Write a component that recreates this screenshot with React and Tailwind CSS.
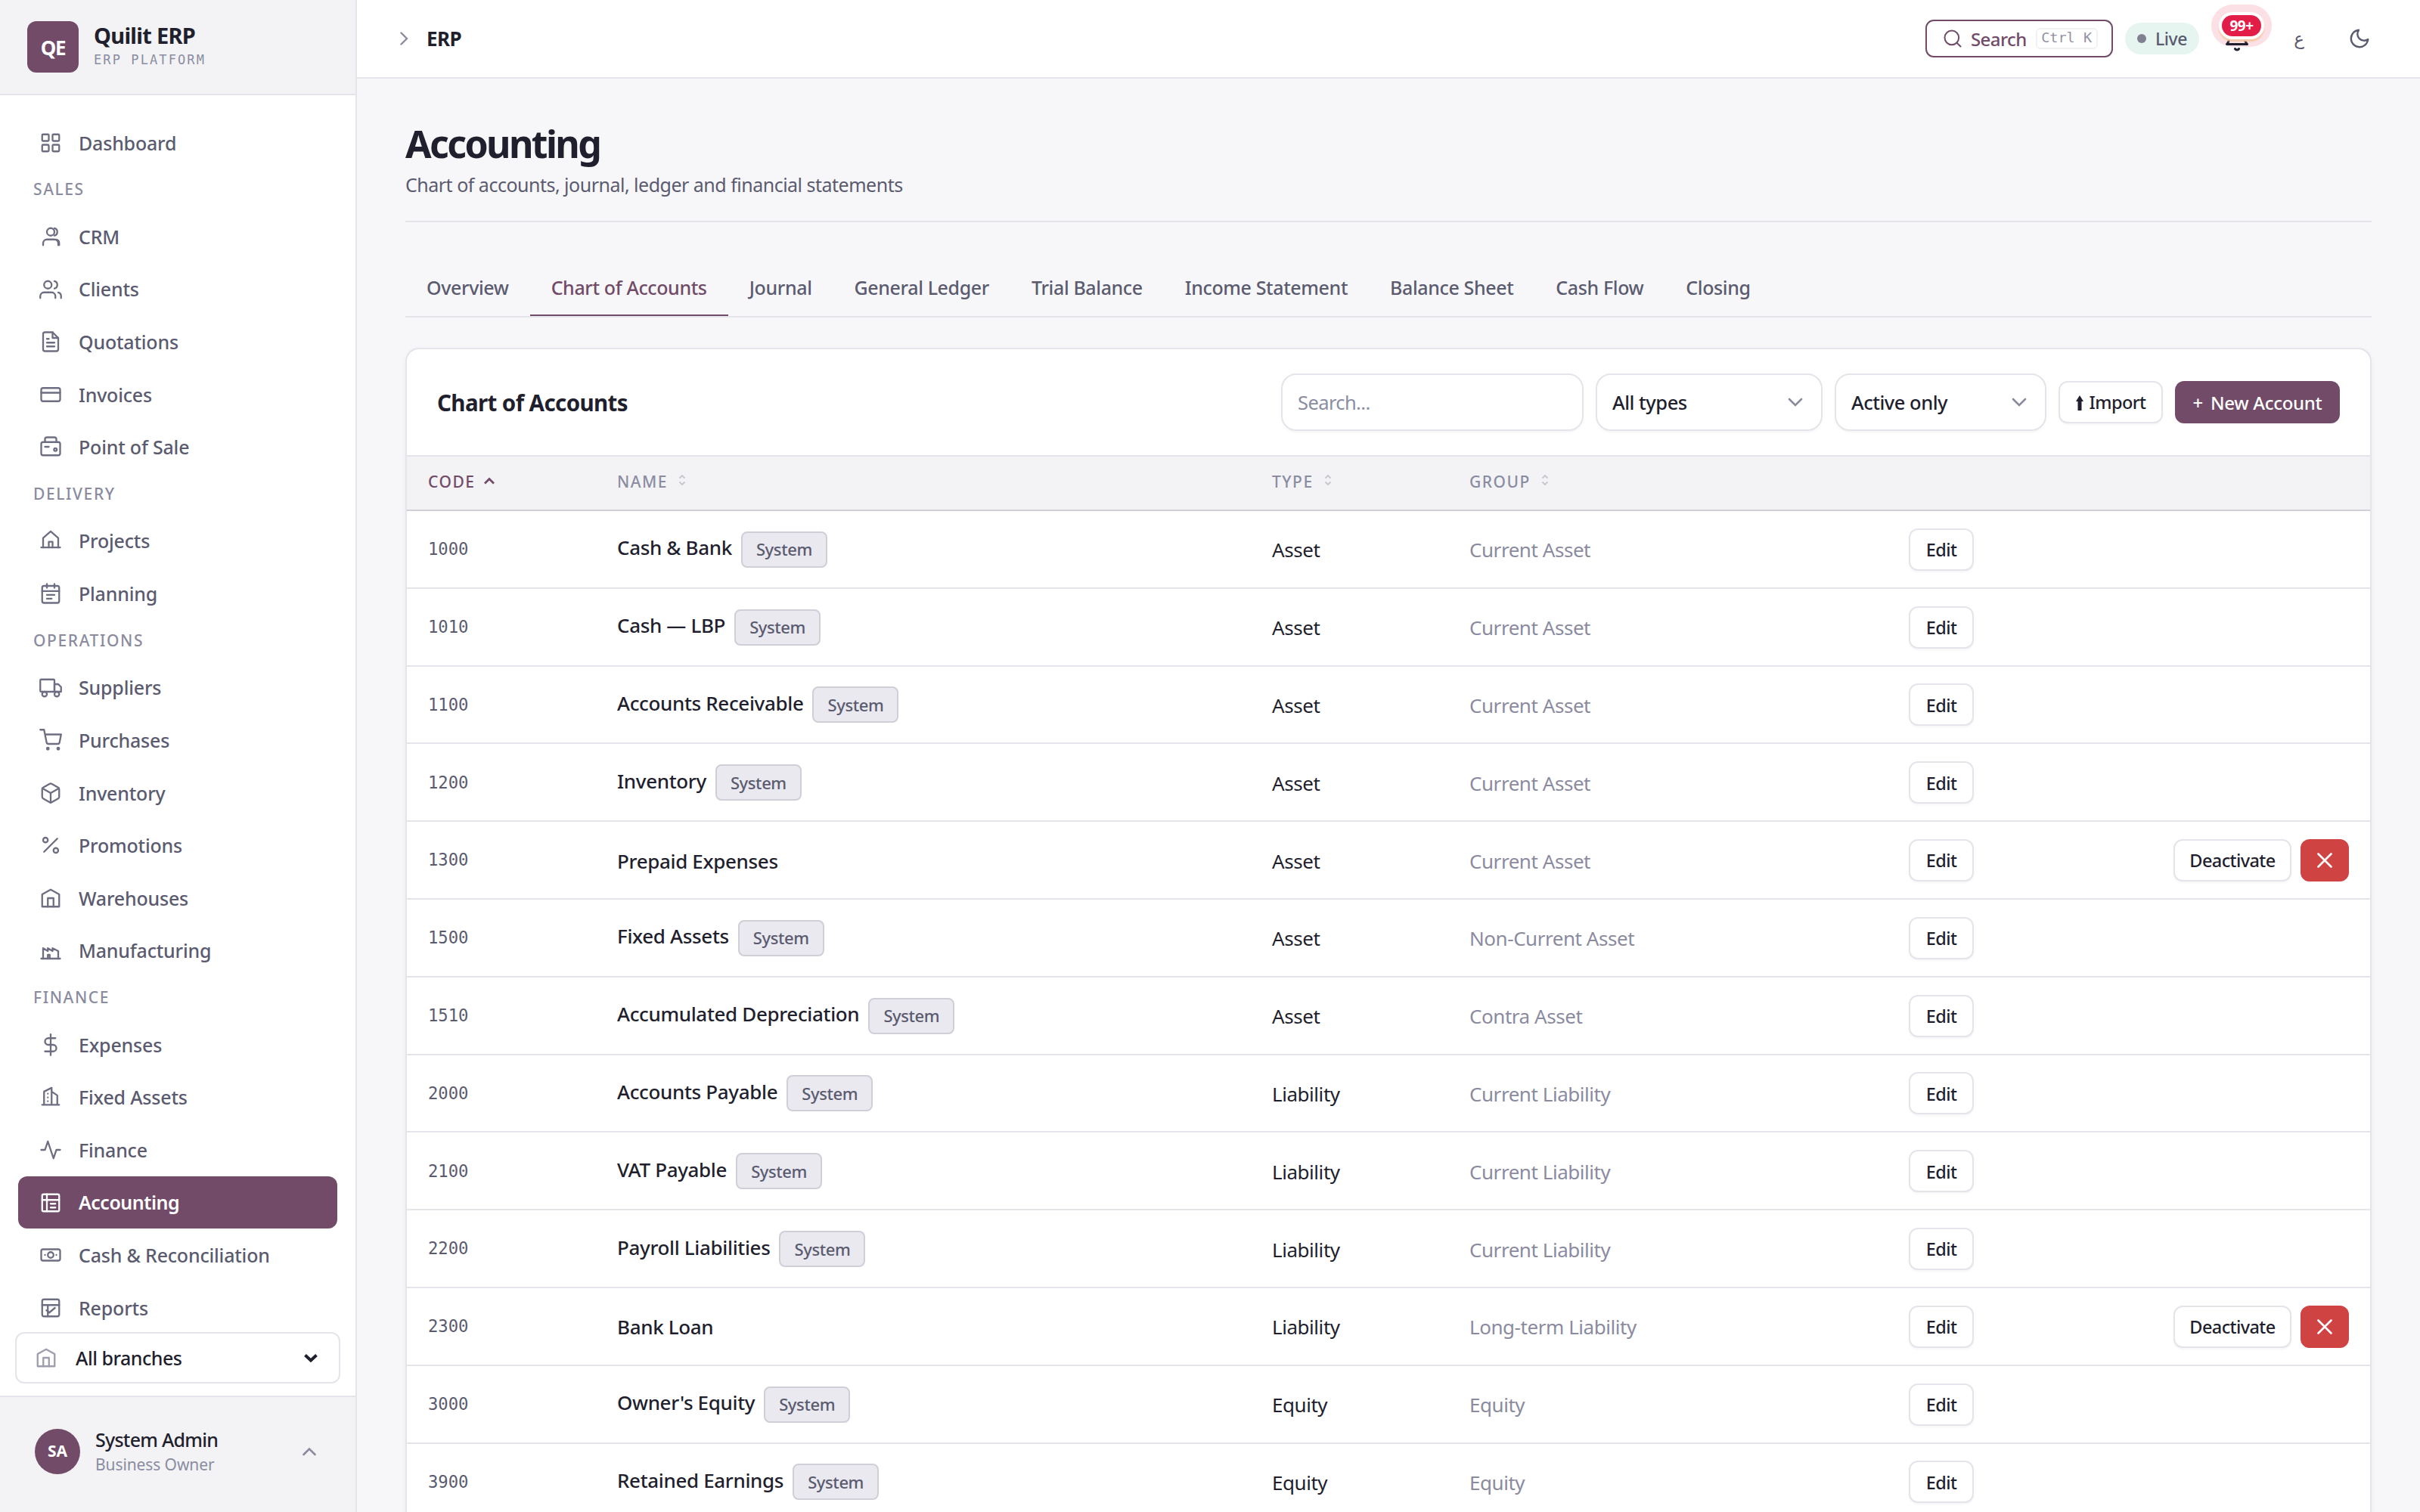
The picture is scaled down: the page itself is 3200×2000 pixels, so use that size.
import React from 'react'

const Icon = ({ size = 30, stroke = 1.85, className, children }) => (
  <svg
    width={size}
    height={size}
    viewBox="0 0 24 24"
    fill="none"
    stroke="currentColor"
    strokeWidth={stroke}
    strokeLinecap="round"
    strokeLinejoin="round"
    className={className}
  >
    {children}
  </svg>
)

const icons = {
  dashboard: (
    <>
      <rect x="3" y="3" width="7" height="7" rx="1" />
      <rect x="14" y="3" width="7" height="7" rx="1" />
      <rect x="3" y="14" width="7" height="7" rx="1" />
      <rect x="14" y="14" width="7" height="7" rx="1" />
    </>
  ),
  crm: (
    <>
      <path d="M4 21v-2a4 4 0 0 1 4-4h8a4 4 0 0 1 4 4v2" />
      <circle cx="12" cy="7" r="4" />
      <path d="M21 21v-2a4 4 0 0 0-3-3.87" />
      <path d="M16 3.13a4 4 0 0 1 0 7.75" />
    </>
  ),
  clients: (
    <>
      <path d="M17 21v-2a4 4 0 0 0-4-4H5a4 4 0 0 0-4 4v2" />
      <circle cx="9" cy="7" r="4" />
      <path d="M23 21v-2a4 4 0 0 0-3-3.87" />
      <path d="M16 3.13a4 4 0 0 1 0 7.75" />
    </>
  ),
  quotations: (
    <>
      <path d="M14 2H6a2 2 0 0 0-2 2v16a2 2 0 0 0 2 2h12a2 2 0 0 0 2-2V8z" />
      <path d="M14 2v6h6" />
      <path d="M16 13H8M16 17H8M10 9H8" />
    </>
  ),
  invoices: (
    <>
      <rect x="2" y="5" width="20" height="14" rx="2" />
      <path d="M2 10h20" />
    </>
  ),
  pos: (
    <>
      <rect x="2" y="7" width="20" height="14" rx="2" />
      <path d="M6 7V4a2 2 0 0 1 2-2h8a2 2 0 0 1 2 2v3" />
      <path d="M6 12h4" />
      <circle cx="17" cy="15" r="1.5" />
    </>
  ),
  projects: (
    <>
      <path d="M2 18.5h20" />
      <path d="M4 18.5V8.5l8-7 8 7v10" />
      <path d="M10 18.5v-6h4v6" />
    </>
  ),
  planning: (
    <>
      <rect x="3" y="4" width="18" height="18" rx="2" />
      <path d="M16 2v4M8 2v4M3 9.5h18M8 13.5h8M8 17.5h5" />
    </>
  ),
  suppliers: (
    <>
      <rect x="1" y="3" width="15" height="13" rx="1" />
      <path d="M16 8h4l3 3v5h-7z" />
      <circle cx="5.5" cy="18.5" r="2.5" />
      <circle cx="18.5" cy="18.5" r="2.5" />
    </>
  ),
  purchases: (
    <>
      <circle cx="9" cy="21" r="1" fill="currentColor" />
      <circle cx="20" cy="21" r="1" fill="currentColor" />
      <path d="M1 1h4l2.68 13.39a2 2 0 0 0 2 1.61h9.72a2 2 0 0 0 2-1.61L23 6H6" />
    </>
  ),
  inventory: (
    <>
      <path d="M21 16V8a2 2 0 0 0-1-1.73l-7-4a2 2 0 0 0-2 0l-7 4A2 2 0 0 0 3 8v8a2 2 0 0 0 1 1.73l7 4a2 2 0 0 0 2 0l7-4A2 2 0 0 0 21 16z" />
      <path d="M3.27 6.96L12 12.01l8.73-5.05M12 22.08V12" />
    </>
  ),
  promotions: (
    <>
      <path d="M19 5L5 19" />
      <circle cx="6.5" cy="6.5" r="2.5" />
      <circle cx="17.5" cy="17.5" r="2.5" />
    </>
  ),
  warehouses: (
    <>
      <path d="M3 21V8l9-5 9 5v13z" />
      <path d="M9 21v-9h6v9" />
    </>
  ),
  manufacturing: (
    <>
      <path d="M2 20h20" />
      <path d="M4 20V9l5 3V9l5 3V9l6 3v8" />
      <path d="M9 20v-4h2v4" />
    </>
  ),
  expenses: (
    <>
      <path d="M12 1v22" />
      <path d="M17 5H9.5a3.5 3.5 0 0 0 0 7h5a3.5 3.5 0 0 1 0 7H6" />
    </>
  ),
  assets: (
    <>
      <path d="M3 20.3h18M5 20.3V6.3l8-4v18M19 20.3v-10l-6-4" />
      <path d="M9 8.5v.01M9 12.5v.01M9 16.5v.01" />
    </>
  ),
  finance: <path d="M22 12h-4l-3 9L9 3l-3 9H2" />,
  accounting: (
    <>
      <rect x="3" y="3" width="18" height="18" rx="1.5" />
      <path d="M3 9h18M8 3v18M12 13h5M12 17h5" />
    </>
  ),
  cash: (
    <>
      <rect x="2" y="6" width="20" height="12" rx="2" />
      <circle cx="12" cy="12" r="3" />
      <path d="M6 12h.01M18 12h.01" />
    </>
  ),
  reports: (
    <>
      <rect x="3" y="3" width="18" height="18" rx="2" />
      <path d="M3 9h18M9 21V9" />
      <path d="M7.5 14.5l3 2.5 6-5" />
    </>
  ),
}

const menu = [
  { title: null, items: [['Dashboard', 'dashboard']] },
  {
    title: 'SALES',
    items: [
      ['CRM', 'crm'],
      ['Clients', 'clients'],
      ['Quotations', 'quotations'],
      ['Invoices', 'invoices'],
      ['Point of Sale', 'pos'],
    ],
  },
  {
    title: 'DELIVERY',
    items: [
      ['Projects', 'projects'],
      ['Planning', 'planning'],
    ],
  },
  {
    title: 'OPERATIONS',
    items: [
      ['Suppliers', 'suppliers'],
      ['Purchases', 'purchases'],
      ['Inventory', 'inventory'],
      ['Promotions', 'promotions'],
      ['Warehouses', 'warehouses'],
      ['Manufacturing', 'manufacturing'],
    ],
  },
  {
    title: 'FINANCE',
    items: [
      ['Expenses', 'expenses'],
      ['Fixed Assets', 'assets'],
      ['Finance', 'finance'],
      ['Accounting', 'accounting'],
      ['Cash & Reconciliation', 'cash'],
      ['Reports', 'reports'],
    ],
  },
]

const tabs = [
  'Overview',
  'Chart of Accounts',
  'Journal',
  'General Ledger',
  'Trial Balance',
  'Income Statement',
  'Balance Sheet',
  'Cash Flow',
  'Closing',
]

const accounts = [
  { code: '1000', name: 'Cash & Bank', type: 'Asset', group: 'Current Asset', system: true },
  { code: '1010', name: 'Cash — LBP', type: 'Asset', group: 'Current Asset', system: true },
  { code: '1100', name: 'Accounts Receivable', type: 'Asset', group: 'Current Asset', system: true },
  { code: '1200', name: 'Inventory', type: 'Asset', group: 'Current Asset', system: true },
  { code: '1300', name: 'Prepaid Expenses', type: 'Asset', group: 'Current Asset', system: false },
  { code: '1500', name: 'Fixed Assets', type: 'Asset', group: 'Non-Current Asset', system: true },
  { code: '1510', name: 'Accumulated Depreciation', type: 'Asset', group: 'Contra Asset', system: true },
  { code: '2000', name: 'Accounts Payable', type: 'Liability', group: 'Current Liability', system: true },
  { code: '2100', name: 'VAT Payable', type: 'Liability', group: 'Current Liability', system: true },
  { code: '2200', name: 'Payroll Liabilities', type: 'Liability', group: 'Current Liability', system: true },
  { code: '2300', name: 'Bank Loan', type: 'Liability', group: 'Long-term Liability', system: false },
  { code: '3000', name: "Owner's Equity", type: 'Equity', group: 'Equity', system: true },
  { code: '3900', name: 'Retained Earnings', type: 'Equity', group: 'Equity', system: true },
]

const NavItem = ({ label, icon, active }) => (
  <a
    className={
      active
        ? 'flex h-[69.6px] shrink-0 items-center gap-[22px] rounded-xl bg-[#714b67] pl-7 text-white'
        : 'flex h-[69.6px] shrink-0 items-center gap-[22px] rounded-xl pl-7 text-[#5b5b70]'
    }
  >
    <Icon className={active ? 'shrink-0' : 'shrink-0 text-[#6e6e82]'}>{icons[icon]}</Icon>
    <span className={active ? 'pt-px text-[25px] font-semibold tracking-[-0.5px]' : 'pt-px text-[25px] font-medium tracking-[-0.2px]'}>
      {label}
    </span>
  </a>
)

const Sidebar = () => (
  <aside className="flex h-full w-[472px] shrink-0 flex-col border-r-2 border-[#e4e4ea] bg-white">
    <div className="flex h-[126px] shrink-0 items-center gap-5 border-b-2 border-[#e4e4ea] bg-[#f3f3f5] pl-9">
      <div className="flex h-[68px] w-[68px] items-center justify-center rounded-xl bg-[#714b67] pt-0.5 text-[26px] font-bold tracking-[-1.2px] text-white">
        QE
      </div>
      <div className="flex flex-col pb-1">
        <span className="text-[29px] leading-[34px] font-bold tracking-[-0.7px] text-[#1f1f2e]">Quilit ERP</span>
        <span className="mt-[3px] font-['DejaVu_Sans_Mono',monospace] text-[17px] leading-6 tracking-[2.1px] text-[#8a8da2]">
          ERP PLATFORM
        </span>
      </div>
    </div>

    <nav className="flex min-h-0 flex-1 flex-col overflow-hidden px-6 pt-7">
      {menu.map((section, i) => (
        <React.Fragment key={i}>
          {section.title && (
            <div className="flex h-[54.7px] shrink-0 items-center pl-5 text-[21px] font-medium tracking-[1.6px] text-[#8b8b9f]">
              {section.title}
            </div>
          )}
          {section.items.map(([label, icon]) => (
            <NavItem key={label} label={label} icon={icon} active={label === 'Accounting'} />
          ))}
        </React.Fragment>
      ))}
    </nav>

    <div className="px-5 pb-4">
      <button className="flex h-[68px] w-[430px] items-center rounded-xl border-2 border-[#e4e4ea] bg-white pr-7 pl-6 text-[#1f1f2e]">
        <Icon className="text-[#9d9dad]">{icons.warehouses}</Icon>
        <span className="ml-6 flex-1 pt-0.5 text-left text-[25px] font-medium tracking-[-0.5px]">All branches</span>
        <svg width="18" height="12" viewBox="0 0 18 12" fill="none" stroke="currentColor" strokeWidth="4">
          <path d="M1.5 2.5L9 9.5l7.5-7" />
        </svg>
      </button>
    </div>

    <div className="flex h-[154px] shrink-0 items-center border-t-2 border-[#e4e4ea] bg-[#f3f3f5] pr-[52px] pb-2 pl-[46px]">
      <div className="flex h-[60px] w-[60px] items-center justify-center rounded-full bg-[#714b67] text-[21px] font-bold text-white">
        SA
      </div>
      <div className="ml-5 flex flex-1 flex-col">
        <span className="text-[25px] leading-[34px] font-medium tracking-[-0.75px] text-[#1f1f2e]">System Admin</span>
        <span className="text-[21px] leading-8 tracking-[-0.1px] text-[#8a8da2]">Business Owner</span>
      </div>
      <svg width="18" height="12" viewBox="0 0 18 12" fill="none" stroke="#8b8b9f" strokeWidth="2.6" strokeLinecap="round">
        <path d="M1.5 10L9 2.5l7.5 7.5" />
      </svg>
    </div>
  </aside>
)

const Topbar = () => (
  <header className="flex h-[104px] shrink-0 items-center justify-between border-b-2 border-[#e4e4ea] bg-white pr-12 pl-14">
    <div className="flex items-center">
      <svg width="12" height="18" viewBox="0 0 12 18" fill="none" stroke="#8b8b9f" strokeWidth="2.4" strokeLinecap="round">
        <path d="M2.5 1.5L10 9l-7.5 7.5" />
      </svg>
      <span className="ml-6 text-[26px] font-bold tracking-[-0.6px] text-[#1f1f2e]">ERP</span>
    </div>
    <div className="flex items-center gap-4">
      <button className="flex h-[50px] w-[248px] items-center rounded-[11px] border-2 border-[#714b67] pl-5 text-[#714b67]">
        <Icon size={28} stroke={1.7}>
          <circle cx="11" cy="11" r="8" />
          <path d="M21 21l-4.35-4.35" />
        </Icon>
        <span className="ml-2.5 pt-0.5 text-[24px] font-medium tracking-[-0.6px]">Search</span>
        <kbd className="ml-3 flex h-7 w-[82px] items-center justify-center rounded-md border-2 border-[#f1f1f4] pb-0.5 font-['DejaVu_Sans_Mono',monospace] text-[18.5px] text-[#9292a4]">
          Ctrl K
        </kbd>
      </button>
      <div className="flex h-[42px] w-[98px] items-center justify-center gap-3 rounded-full bg-[#e6f5f0] text-[23px] font-medium tracking-[-0.4px] text-[#5b5b70]">
        <span className="h-3 w-3 rounded-full bg-[#80808f]"></span>
        Live
      </div>
      <button className="relative flex h-[68px] w-[68px] items-center justify-center text-[#1f1f2e]">
        <span className="absolute -top-[11px] left-0 h-14 w-20 rounded-full bg-[#fbe1e6]"></span>
        <Icon size={36} stroke={2} className="relative">
          <path d="M18 8A6 6 0 0 0 6 8c0 6-3 9-3 9h18s-3-3-3-9" />
          <path d="M13.73 21a2 2 0 0 1-3.46 0" />
        </Icon>
        <span className="absolute top-[3px] left-3.5 flex h-7 w-[52px] items-center justify-center rounded-full bg-[#e11d48] text-[19px] font-bold tracking-[-0.6px] text-white shadow-[0_0_0_4px_#fff,0_3px_2px_4px_#f5c9a8]">
          99+
        </span>
      </button>
      <button className="flex h-16 w-16 items-center justify-center font-['DejaVu_Sans',sans-serif] text-[23px] text-[#5b5b70]">
        ع
      </button>
      <button className="flex h-16 w-16 items-center justify-center text-[#5b5b70]">
        <Icon size={30} stroke={1.9}>
          <path d="M21 12.79A9 9 0 1 1 11.21 3 7 7 0 0 0 21 12.79z" />
        </Icon>
      </button>
    </div>
  </header>
)

const SortIcon = () => (
  <svg width="10" height="14" viewBox="0 0 10 14" fill="none" stroke="#c6c6cf" strokeWidth="1.8" className="mb-1.5 ml-0.5">
    <path d="M1.5 4.5L5 1l3.5 3.5M1.5 9.5L5 13l3.5-3.5" />
  </svg>
)

const Select = ({ label, className }) => (
  <button
    className={`flex h-[76px] items-center justify-between rounded-[20px] border-2 border-[#e4e4ea] pr-6 pl-5 shadow-[0_2px_3px_rgba(0,0,0,0.04)] ${className}`}
  >
    <span className="pt-px text-[25.5px] font-medium tracking-[-0.5px] text-[#1f1f2e]">{label}</span>
    <svg width="20" height="12" viewBox="0 0 20 12" fill="none" stroke="#8b8b9f" strokeWidth="2.6" strokeLinecap="round">
      <path d="M2 2l8 8 8-8" />
    </svg>
  </button>
)

const columns = 'grid grid-cols-[250px_866px_261px_581px_1fr]'

const buttonClass =
  'flex h-14 items-center justify-center rounded-xl border-2 border-[#e4e4ea] bg-white pt-0.5 text-[23.5px] font-medium tracking-[-0.6px] text-[#1f1f2e] shadow-[0_2px_3px_rgba(0,0,0,0.04)]'

const AccountRow = ({ account }) => (
  <div className={`${columns} h-[102.8px] shrink-0 items-center border-b-2 border-[#e4e4ea] pt-px`}>
    <span className="pl-7 font-['DejaVu_Sans_Mono',monospace] text-[22.2px] text-[#5b5b70]">{account.code}</span>
    <div className={account.system ? 'flex items-center gap-3 pl-7' : 'flex items-center pt-0.5 pl-7'}>
      <span className={account.system ? 'pb-1 text-[26px] font-medium tracking-[-0.35px] text-[#1f1f2e]' : 'text-[26px] font-medium tracking-[-0.35px] text-[#1f1f2e]'}>
        {account.name}
      </span>
      {account.system && (
        <span className="flex h-12 w-[114px] items-center justify-center rounded-lg border-2 border-[#cfcfd8] bg-[#e9e9ef] text-[22px] font-medium tracking-[-0.4px] text-[#5b5b70]">
          System
        </span>
      )}
    </div>
    <span className="pt-0.5 pl-7 text-[26px] tracking-[-0.45px] text-[#1f1f2e]">{account.type}</span>
    <span className="pt-0.5 pl-7 text-[26px] tracking-[-0.45px] text-[#8b8b9f]">{account.group}</span>
    <div className="flex items-center justify-between pr-7 pl-7">
      <button className={`${buttonClass} w-[86px]`}>Edit</button>
      {!account.system && (
        <div className="flex gap-3">
          <button className={`${buttonClass} w-[156px]`}>Deactivate</button>
          <button className="flex h-14 w-16 items-center justify-center rounded-xl bg-[#d04343]">
            <svg width="20" height="20" viewBox="0 0 20 20" stroke="#fff" strokeWidth="2.6" strokeLinecap="round">
              <path d="M1.5 1.5l17 17M18.5 1.5l-17 17" />
            </svg>
          </button>
        </div>
      )}
    </div>
  </div>
)

const ChartOfAccounts = () => (
  <section className="mt-10 flex min-h-0 flex-1 flex-col overflow-hidden rounded-t-[18px] border-2 border-b-0 border-[#e4e4ea] bg-white shadow-[0_2px_6px_rgba(0,0,0,0.05)]">
    <div className="flex h-[142px] shrink-0 items-center border-b-2 border-[#e4e4ea] px-10">
      <h2 className="flex-1 pt-0.5 text-[29.5px] font-bold tracking-[-0.6px] text-[#1f1f2e]">Chart of Accounts</h2>
      <div className="flex items-center gap-4">
        <div className="flex h-[76px] w-[400px] items-center rounded-[20px] border-2 border-[#e4e4ea] pl-5 text-[25.5px] tracking-[-0.6px] text-[#8a8da2] shadow-[0_2px_3px_rgba(0,0,0,0.04)]">
          Search...
        </div>
        <Select label="All types" className="w-[300px]" />
        <Select label="Active only" className="w-[280px]" />
        <button className={`${buttonClass} w-[138px] gap-2`}>
          <svg width="10" height="20" viewBox="0 0 10 20" fill="currentColor">
            <path d="M5 0l5 8H7.5v12h-5V8H0z" />
          </svg>
          Import
        </button>
        <button className="flex h-14 w-[218px] items-center justify-center gap-2.5 rounded-xl bg-[#714b67] pt-0.5 text-[24px] font-medium tracking-[-0.3px] text-white">
          <span>+</span>
          <span>New Account</span>
        </button>
      </div>
    </div>

    <div className={`${columns} h-[72px] shrink-0 items-center border-b-2 border-[#cfcfd8] bg-[#f3f3f5] pb-0.5 text-[21px] font-medium tracking-[1.5px] text-[#8a8da2]`}>
      <div className="flex items-center gap-3 pl-7 text-[#714b67]">
        CODE
        <svg width="14" height="10" viewBox="0 0 14 10" fill="none" stroke="currentColor" strokeWidth="2.8" className="mb-1">
          <path d="M1 8.5l6-6 6 6" />
        </svg>
      </div>
      <div className="flex items-center gap-3 pl-7">
        NAME <SortIcon />
      </div>
      <div className="flex items-center gap-3 pl-7">
        TYPE <SortIcon />
      </div>
      <div className="flex items-center gap-3 pl-7">
        GROUP <SortIcon />
      </div>
    </div>

    {accounts.map((account) => (
      <AccountRow key={account.code} account={account} />
    ))}
  </section>
)

export default function App() {
  return (
    <div className="flex h-[2000px] w-[3200px] overflow-hidden bg-[#f7f7f9] font-['Noto_Sans',sans-serif]">
      <Sidebar />
      <div className="flex min-w-0 flex-1 flex-col">
        <Topbar />
        <main className="flex min-h-0 flex-1 flex-col pr-16 pl-16">
          <div className="flex h-[190px] shrink-0 flex-col border-b-2 border-[#e4e4ea] pt-[54px]">
            <h1 className="text-[50px] leading-[64px] font-bold tracking-[-2.6px] text-[#1f1f2e]">Accounting</h1>
            <p className="mt-0.5 text-[25px] leading-10 tracking-[-0.5px] text-[#5b5b70]">
              Chart of accounts, journal, ledger and financial statements
            </p>
          </div>
          <div className="mt-[50px] flex h-[76px] shrink-0 border-b-2 border-[#e4e4ea]">
            {tabs.map((tab) => (
              <button
                key={tab}
                className={
                  tab === 'Chart of Accounts'
                    ? 'border-b-2 border-[#714b67] px-7 pt-0.5 text-[25px] font-medium tracking-[-0.38px] text-[#714b67]'
                    : 'border-b-2 border-transparent px-7 pt-0.5 text-[25px] font-medium tracking-[-0.38px] text-[#5b5b70]'
                }
              >
                {tab}
              </button>
            ))}
          </div>
          <ChartOfAccounts />
        </main>
      </div>
    </div>
  )
}
